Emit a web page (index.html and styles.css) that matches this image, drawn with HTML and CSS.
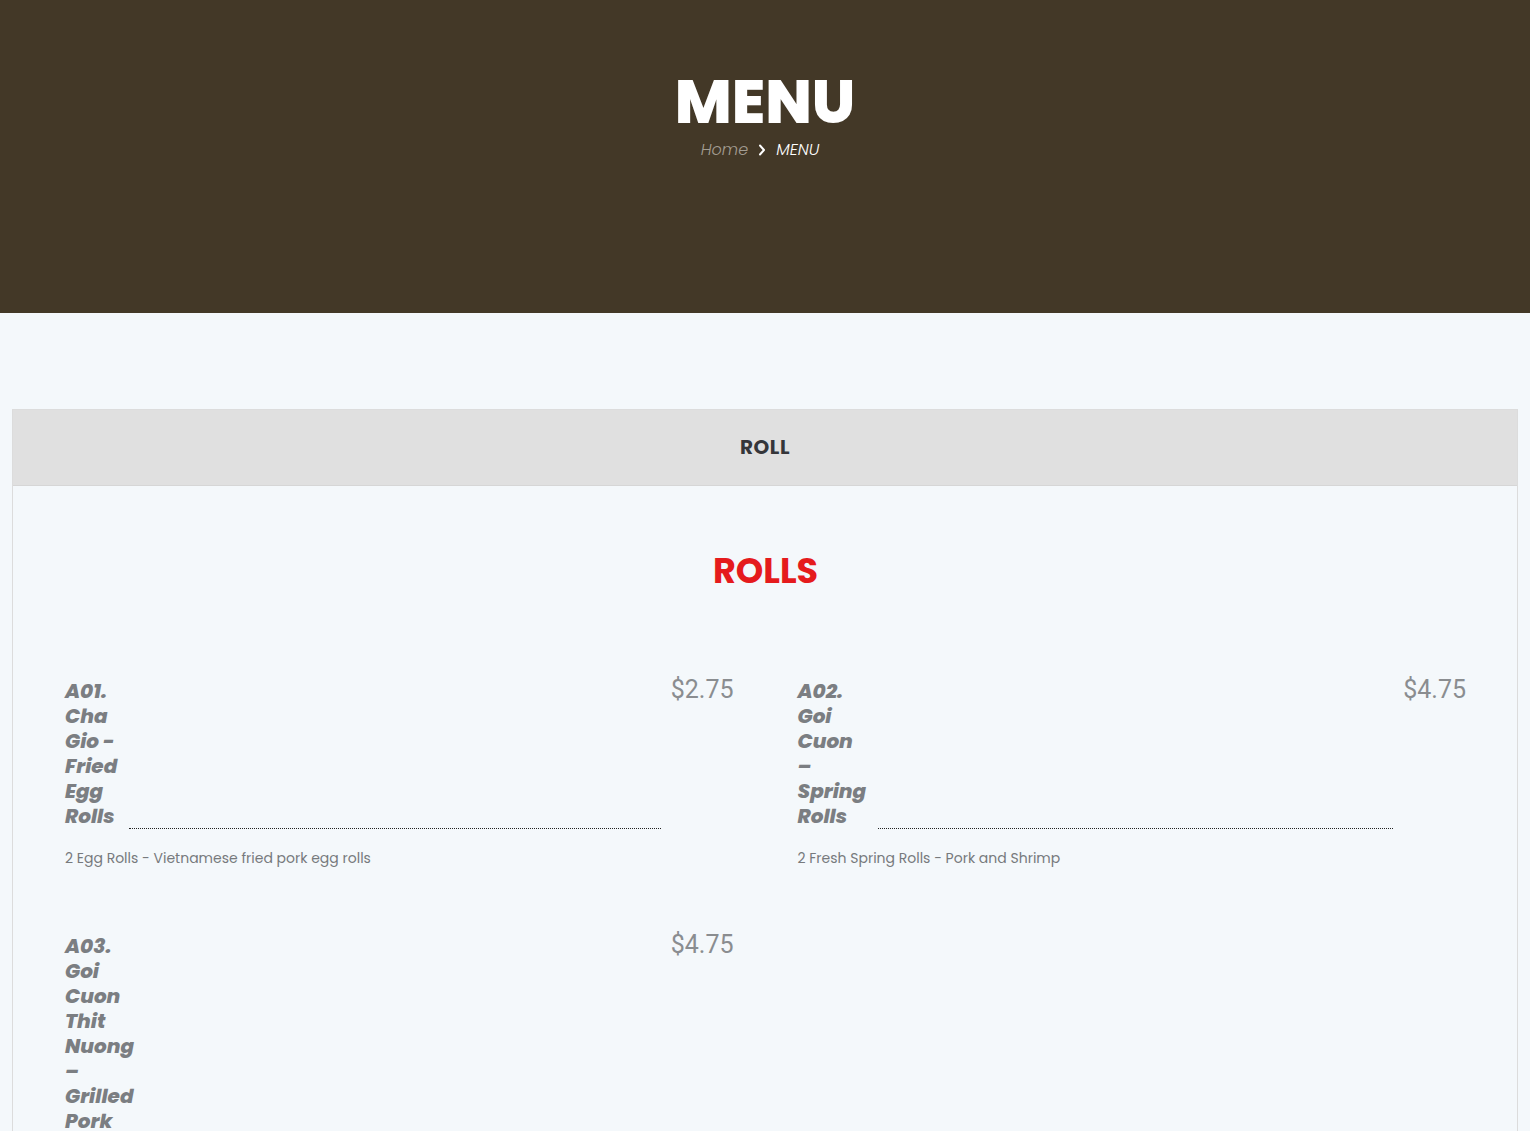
FILE: index.html
```html
<!DOCTYPE html>
<html lang="en">
<head>
<meta charset="utf-8">
<title>Menu</title>
<link rel="stylesheet" href="styles.css">
</head>
<body>
<header class="hero">
  <h1 class="hero-title">MENU</h1>
  <nav class="crumbs">
    <span class="crumb-home">Home</span>
    <svg class="crumb-sep" width="8" height="12" viewBox="0 0 8 12"><path d="M2 1.5 L6 6 L2 10.5" fill="none" stroke="#ffffff" stroke-width="2" stroke-linecap="round" stroke-linejoin="round"/></svg>
    <span class="crumb-current">MENU</span>
  </nav>
</header>
<main class="content">
  <section class="panel">
    <div class="tab-head">ROLL</div>
    <div class="tab-body">
      <h2 class="section-title">ROLLS</h2>
      <div class="menu-grid">
        <div class="item">
          <div class="item-row">
            <h3 class="item-name">A01. Cha Gio - Fried Egg Rolls</h3>
            <span class="dots"></span>
            <span class="price">$2.75</span>
          </div>
          <p class="item-desc">2 Egg Rolls - Vietnamese fried pork egg rolls</p>
        </div>
        <div class="item">
          <div class="item-row">
            <h3 class="item-name">A02. Goi Cuon – Spring Rolls</h3>
            <span class="dots"></span>
            <span class="price">$4.75</span>
          </div>
          <p class="item-desc">2 Fresh Spring Rolls - Pork and Shrimp</p>
        </div>
        <div class="item">
          <div class="item-row">
            <h3 class="item-name">A03. Goi Cuon Thit Nuong – Grilled Pork Spring Rolls</h3>
            <span class="dots"></span>
            <span class="price">$4.75</span>
          </div>
          <p class="item-desc">2 Fresh Spring Rolls - Grilled Pork</p>
        </div>
      </div>
    </div>
  </section>
</main>
</body>
</html>
```

FILE: styles.css
```css
html, body {
  margin: 0;
  padding: 0;
}
body {
  background: #f4f8fb;
  font-family: "Poppins", "Open Sans", "Noto Sans", sans-serif;
  color: #777;
}
.hero {
  background: #433827;
  height: 313px;
  box-sizing: border-box;
  padding-top: 66px;
  display: flex;
  flex-direction: column;
  align-items: center;
}
.hero-title {
  margin: 0;
  color: #ffffff;
  font-size: 61px;
  line-height: 72px;
  font-weight: 800;
  letter-spacing: 0;
}
.crumbs {
  margin-top: 0;
  padding-right: 10px;
  display: flex;
  align-items: center;
  gap: 10px;
  font-size: 16px;
  font-style: italic;
  font-weight: 300;
  line-height: 24px;
}
.crumb-home {
  color: #a39d92;
}
.crumb-current {
  color: #ffffff;
}
.crumb-sep {
  display: block;
}
.content {
  padding: 96px 12px 0;
}
.panel {
  border: 1px solid #dcdcdc;
  border-bottom: none;
  min-height: 800px;
}
.tab-head {
  background: #e0e0e0;
  height: 76px;
  box-sizing: border-box;
  padding-bottom: 2px;
  border-bottom: 1px solid #d6d6d6;
  display: flex;
  align-items: center;
  justify-content: center;
  color: #35363a;
  font-size: 20px;
  font-weight: 700;
  letter-spacing: 0.5px;
}
.tab-body {
  padding: 64px 51px 0 52px;
}
.section-title {
  margin: 0;
  text-align: center;
  color: #e51b1d;
  font-size: 35px;
  line-height: 41px;
  font-weight: 700;
}
.menu-grid {
  margin-top: 88px;
  display: grid;
  grid-template-columns: 1fr 1fr;
  column-gap: 64px;
  row-gap: 65px;
}
.item-row {
  display: flex;
  align-items: flex-start;
}
.item-name {
  margin: 0;
  width: min-content;
  font-size: 20px;
  line-height: 25px;
  font-style: italic;
  font-weight: 800;
  color: #7b7e82;
}
.dots {
  flex: 1;
  align-self: flex-end;
  border-bottom: 1px dotted #222;
  margin: 0 10px 0 12px;
}
.price {
  font-family: "Roboto", "Liberation Sans", sans-serif;
  font-size: 25px;
  line-height: 22px;
  color: #8a8d90;
}
.item-desc {
  margin: 19px 0 0;
  font-size: 14px;
  line-height: 21px;
  color: #777a7d;
}
```
